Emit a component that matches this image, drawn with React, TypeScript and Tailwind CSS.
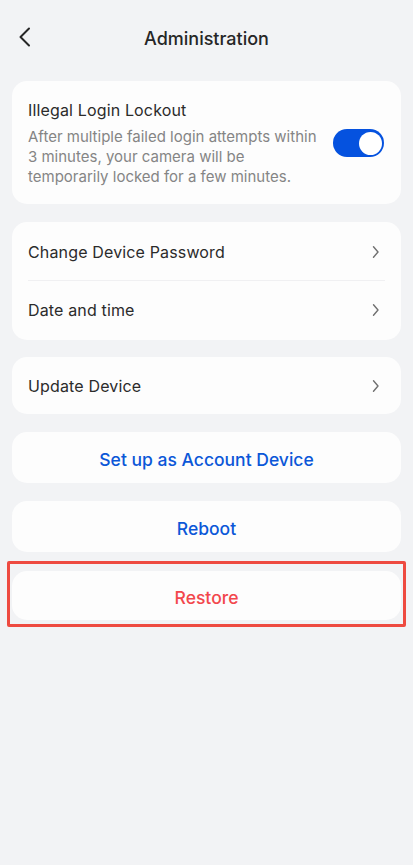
import { useState } from "react";

function Chevron() {
  return (
    <svg width="9" height="14" viewBox="0 0 9 14" fill="none" className="shrink-0">
      <path
        d="M2.5 1.8L7 7L2.5 12.2"
        stroke="#707070"
        strokeWidth="1.4"
        strokeLinecap="round"
        strokeLinejoin="round"
      />
    </svg>
  );
}

function Toggle({ on, onChange }: { on: boolean; onChange: (v: boolean) => void }) {
  return (
    <button
      onClick={() => onChange(!on)}
      className={`relative shrink-0 w-[51px] h-[28px] rounded-full transition-colors ${
        on ? "bg-[#0552df]" : "bg-[#d9d9dd]"
      }`}
    >
      <span
        className={`absolute top-[2.5px] w-[23px] h-[23px] rounded-full bg-white transition-all ${
          on ? "left-[26px]" : "left-[2.5px]"
        }`}
      />
    </button>
  );
}

function NavRow({ label, divider }: { label: string; divider?: boolean }) {
  return (
    <div className="px-4">
      <div
        className={`flex items-center justify-between pr-[5px] ${
          divider ? "h-[58px] border-b border-[#f0f0f2]" : "h-[58px]"
        }`}
      >
        <span className="text-[16px] tracking-[0.15px] text-[#2b2b2b]">{label}</span>
        <Chevron />
      </div>
    </div>
  );
}

function ActionCard({ label, danger }: { label: string; danger?: boolean }) {
  return (
    <button
      className={`w-full rounded-[15px] bg-[#fdfdfd] pt-[5px] text-[17.5px] font-medium ${
        danger ? "h-[49px] text-[#f2474c]" : "h-[51px] text-[#0b57d8]"
      }`}
    >
      {label}
    </button>
  );
}

export default function App() {
  const [lockout, setLockout] = useState(true);

  return (
    <div className="min-h-[865px] w-full bg-[#f2f3f5] font-['Inter',sans-serif]">
      <header className="relative h-[78px] flex items-center justify-center">
        <button className="absolute left-[16px] top-[27px] w-[16px] h-[20px] flex items-center justify-center">
          <svg width="13" height="20" viewBox="0 0 13 20" fill="none">
            <path
              d="M11 1.5L2.5 10L11 18.5"
              stroke="#262626"
              strokeWidth="2"
              strokeLinecap="round"
              strokeLinejoin="round"
            />
          </svg>
        </button>
        <h1 className="text-[18px] font-medium text-[#262626] -mt-[2px]">Administration</h1>
      </header>

      <main className="flex flex-col gap-[18px] px-3 pt-[3px]">
        <section className="flex items-center gap-3 rounded-[15px] bg-[#fdfdfd] pl-4 pr-[17px] pt-[18px] pb-[17px]">
          <div className="flex-1 flex flex-col gap-[6px]">
            <h2 className="text-[16px] leading-[22px] tracking-[0.15px] text-[#2b2b2b]">
              Illegal Login Lockout
            </h2>
            <p className="text-[15px] leading-[20px] text-[#858585]">
              After multiple failed login attempts within 3 minutes, your camera will be
              temporarily locked for a few minutes.
            </p>
          </div>
          <Toggle on={lockout} onChange={setLockout} />
        </section>

        <section className="rounded-[15px] bg-[#fdfdfd] py-px">
          <NavRow label="Change Device Password" divider />
          <NavRow label="Date and time" />
        </section>

        <section className="rounded-[15px] bg-[#fdfdfd] -mt-px">
          <div className="px-4">
            <div className="flex items-center justify-between pr-[5px] h-[57px]">
              <span className="text-[16px] tracking-[0.15px] text-[#2b2b2b]">Update Device</span>
              <Chevron />
            </div>
          </div>
        </section>

        <ActionCard label="Set up as Account Device" />
        <ActionCard label="Reboot" />

        <div className="-mt-[9px] -mx-[5px] border-[3px] border-[#ee4a40] rounded-[2px] px-[2px] pt-[7px] pb-[4px]">
          <ActionCard label="Restore" danger />
        </div>
      </main>
    </div>
  );
}
